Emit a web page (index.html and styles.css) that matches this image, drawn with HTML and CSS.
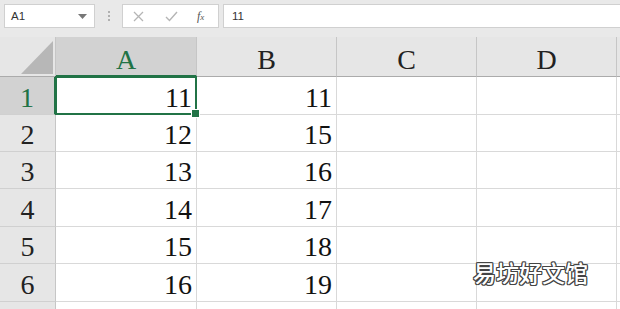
FILE: index.html
```html
<!DOCTYPE html>
<html>
<head>
<meta charset="utf-8">
<link rel="stylesheet" href="styles.css">
</head>
<body>
<div class="app">
  <div class="toolbar">
    <div class="namebox">
      <span class="name">A1</span>
      <svg class="caret" width="9" height="5" viewBox="0 0 9 5"><path d="M0 0H9L4.5 5Z" fill="#777"/></svg>
    </div>
    <div class="dots"><span></span><span></span><span></span></div>
    <div class="fbtns">
      <svg class="ico" width="11" height="11" viewBox="0 0 11 11"><path d="M1 1L10 10M10 1L1 10" stroke="#b5b5b5" stroke-width="1.3" fill="none"/></svg>
      <svg class="ico" width="13" height="11" viewBox="0 0 13 11"><path d="M1 6L4.5 9.5L12 1" stroke="#b5b5b5" stroke-width="1.4" fill="none"/></svg>
      <span class="fx"><i>f</i><i class="x">x</i></span>
    </div>
    <div class="finput">11</div>
  </div>
  <div class="sheet">
    <div class="corner"><div class="tri"></div></div>
    <div class="ch sel">A</div>
    <div class="ch">B</div>
    <div class="ch">C</div>
    <div class="ch">D</div>
    <div class="ch last"></div>

    <div class="rh sel">1</div>
    <div class="c active">11</div><div class="c">11</div><div class="c"></div><div class="c"></div><div class="c last"></div>
    <div class="rh">2</div>
    <div class="c">12</div><div class="c">15</div><div class="c"></div><div class="c"></div><div class="c last"></div>
    <div class="rh">3</div>
    <div class="c">13</div><div class="c">16</div><div class="c"></div><div class="c"></div><div class="c last"></div>
    <div class="rh">4</div>
    <div class="c">14</div><div class="c">17</div><div class="c"></div><div class="c"></div><div class="c last"></div>
    <div class="rh">5</div>
    <div class="c">15</div><div class="c">18</div><div class="c"></div><div class="c"></div><div class="c last"></div>
    <div class="rh">6</div>
    <div class="c">16</div><div class="c">19</div><div class="c"></div><div class="c"></div><div class="c last"></div>
    <div class="rh"></div>
    <div class="c"></div><div class="c"></div><div class="c"></div><div class="c"></div><div class="c last"></div>
  </div>
  <div class="watermark">易坊好文馆</div>
</div>
</body>
</html>
```

FILE: styles.css
```css
* { box-sizing: border-box; }
html, body { margin: 0; padding: 0; }
body {
  width: 620px;
  height: 309px;
  overflow: hidden;
  background: #e9e9e9;
  font-family: "Liberation Serif", "Noto Sans CJK SC", serif;
}
.app { position: relative; width: 620px; height: 309px; overflow: hidden; }

.toolbar {
  display: flex;
  align-items: center;
  height: 37px;
  padding: 4px 0 9px 4px;
  background: #e9e9e9;
}
.namebox {
  width: 91px;
  height: 24px;
  background: #fff;
  border: 1px solid #d0d0d0;
  display: flex;
  align-items: center;
  justify-content: space-between;
  padding: 0 7px 0 6px;
  font-family: "Liberation Sans", Arial, sans-serif;
  font-size: 11.5px;
  color: #333;
}
.caret { margin-top: 1px; }
.dots {
  width: 27px;
  display: flex;
  flex-direction: column;
  align-items: center;
  gap: 2px;
}
.dots span { width: 2px; height: 2px; background: #b0b0b0; }
.fbtns {
  width: 97px;
  height: 24px;
  background: #fff;
  border: 1px solid #d0d0d0;
  display: flex;
  align-items: center;
  padding: 0 0 0 10px;
  gap: 21px;
}
.fx {
  font-family: "Liberation Serif", serif;
  font-size: 12px;
  color: #555;
  margin-left: -2px;
}
.fx .x { font-size: 9px; }
.finput {
  flex: 1;
  height: 24px;
  margin-left: 4px;
  background: #fff;
  border: 1px solid #d0d0d0;
  border-right: none;
  padding: 0 0 0 8px;
  display: flex;
  align-items: center;
  font-family: "Liberation Sans", Arial, sans-serif;
  font-size: 11.5px;
  color: #333;
}

.sheet {
  display: grid;
  grid-template-columns: 56px 141px 140px 140px 140px 1fr;
  grid-template-rows: 40px 38px 37px 37px 38px 37px 38px 37px;
  background: #fff;
}
.corner {
  background: #e6e6e6;
  border-right: 1px solid #c6c6c6;
  border-bottom: 1px solid #ababab;
  position: relative;
}
.tri {
  position: absolute;
  right: 2px;
  bottom: 2px;
  width: 32px;
  height: 33px;
  background: #b7b7b7;
  clip-path: polygon(100% 0, 100% 100%, 0 100%);
}
.ch {
  background: #e6e6e6;
  border-right: 1px solid #c6c6c6;
  border-bottom: 1px solid #ababab;
  display: flex;
  align-items: center;
  justify-content: center;
  font-size: 28px;
  color: #222;
  padding-top: 6px;
}
.ch span { display: inline-block; }
.ch.sel {
  background: #d2d2d2;
  color: #217346;
  border-bottom: 2px solid #217346;
  padding-top: 7px;
}
.ch.last, .c.last { border-right: none; }
.rh {
  background: #e6e6e6;
  border-right: 1px solid #c6c6c6;
  border-bottom: 1px solid #d0d0d0;
  display: flex;
  align-items: center;
  justify-content: center;
  font-size: 28px;
  color: #222;
  padding-top: 4px;
}
.rh.sel {
  background: #d2d2d2;
  color: #217346;
  border-right: 2px solid #217346;
}
.c {
  border-right: 1px solid #d9d9d9;
  border-bottom: 1px solid #d9d9d9;
  display: flex;
  align-items: center;
  justify-content: flex-end;
  padding: 4px 4px 0 0;
  font-size: 28px;
  color: #111;
}
.c.active { position: relative; }
.c.active::before {
  content: "";
  position: absolute;
  left: -1px;
  top: -1px;
  right: -1px;
  bottom: -1px;
  border: 2px solid #217346;
}
.c.active::after {
  content: "";
  position: absolute;
  right: -4px;
  bottom: -4px;
  width: 7px;
  height: 7px;
  background: #217346;
  border: 1px solid #fff;
  z-index: 2;
}

.watermark {
  position: absolute;
  left: 473px;
  top: 259px;
  font-family: "Noto Sans CJK SC", sans-serif;
  font-size: 23px;
  font-weight: 500;
  color: #fff;
  line-height: 1.2;
  text-shadow:
    1px 0 0 #444, -1px 0 0 #444, 0 1px 0 #444, 0 -1px 0 #444,
    1px 1px 0 #444, -1px -1px 0 #444, 1px -1px 0 #444, -1px 1px 0 #444;
}
```
